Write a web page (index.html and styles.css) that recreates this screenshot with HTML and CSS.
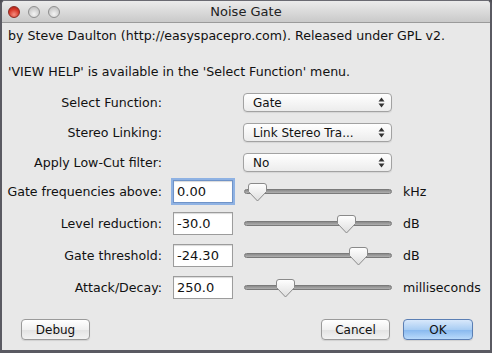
FILE: index.html
```html
<!DOCTYPE html>
<html>
<head>
<meta charset="utf-8">
<link rel="stylesheet" href="styles.css">
</head>
<body>
<div class="window">
  <div class="titlebar">
    <div class="lights">
      <span class="light red"></span>
      <span class="light"></span>
      <span class="light"></span>
    </div>
    <div class="title">Noise Gate</div>
  </div>
  <div class="content">
    <p class="info first">by Steve Daulton (http://easyspacepro.com). Released under GPL v2.</p>
    <p class="info second">'VIEW HELP' is available in the 'Select Function' menu.</p>

    <div class="selects">
      <div class="row sel">
        <label class="lbl">Select Function:</label>
        <div class="select"><span>Gate</span><svg class="arr" width="7" height="11" viewBox="0 0 7 11"><path d="M0.5 4.5 L3.5 0.5 L6.5 4.5Z M0.5 6.5 L3.5 10.5 L6.5 6.5Z" fill="#333"/></svg></div>
      </div>
      <div class="row sel">
        <label class="lbl">Stereo Linking:</label>
        <div class="select"><span>Link Stereo Tra...</span><svg class="arr" width="7" height="11" viewBox="0 0 7 11"><path d="M0.5 4.5 L3.5 0.5 L6.5 4.5Z M0.5 6.5 L3.5 10.5 L6.5 6.5Z" fill="#333"/></svg></div>
      </div>
      <div class="row sel">
        <label class="lbl">Apply Low-Cut filter:</label>
        <div class="select"><span>No</span><svg class="arr" width="7" height="11" viewBox="0 0 7 11"><path d="M0.5 4.5 L3.5 0.5 L6.5 4.5Z M0.5 6.5 L3.5 10.5 L6.5 6.5Z" fill="#333"/></svg></div>
      </div>
    </div>

    <div class="sliders">
      <div class="row sl">
        <label class="lbl">Gate frequencies above:</label>
        <div class="input focus">0.00</div>
        <div class="slider"><div class="track"></div><svg class="thumb" style="left:3px" width="21" height="21" viewBox="0 0 21 21"><path d="M4 1.5 H17 Q19.5 1.5 19.5 4 V9.5 L10.5 19 L1.5 9.5 V4 Q1.5 1.5 4 1.5Z" fill="url(#g)" stroke="#8a8a8a"/><defs><linearGradient id="g" x1="0" y1="0" x2="0" y2="1"><stop offset="0" stop-color="#ffffff"/><stop offset="1" stop-color="#dedede"/></linearGradient></defs></svg></div>
        <span class="unit">kHz</span>
      </div>
      <div class="row sl">
        <label class="lbl">Level reduction:</label>
        <div class="input">-30.0</div>
        <div class="slider"><div class="track"></div><svg class="thumb" style="left:92px" width="21" height="21" viewBox="0 0 21 21"><path d="M4 1.5 H17 Q19.5 1.5 19.5 4 V9.5 L10.5 19 L1.5 9.5 V4 Q1.5 1.5 4 1.5Z" fill="url(#g)" stroke="#8a8a8a"/></svg></div>
        <span class="unit">dB</span>
      </div>
      <div class="row sl">
        <label class="lbl">Gate threshold:</label>
        <div class="input">-24.30</div>
        <div class="slider"><div class="track"></div><svg class="thumb" style="left:104px" width="21" height="21" viewBox="0 0 21 21"><path d="M4 1.5 H17 Q19.5 1.5 19.5 4 V9.5 L10.5 19 L1.5 9.5 V4 Q1.5 1.5 4 1.5Z" fill="url(#g)" stroke="#8a8a8a"/></svg></div>
        <span class="unit">dB</span>
      </div>
      <div class="row sl">
        <label class="lbl">Attack/Decay:</label>
        <div class="input">250.0</div>
        <div class="slider"><div class="track"></div><svg class="thumb" style="left:31px" width="21" height="21" viewBox="0 0 21 21"><path d="M4 1.5 H17 Q19.5 1.5 19.5 4 V9.5 L10.5 19 L1.5 9.5 V4 Q1.5 1.5 4 1.5Z" fill="url(#g)" stroke="#8a8a8a"/></svg></div>
        <span class="unit">milliseconds</span>
      </div>
    </div>

    <div class="buttons">
      <button class="btn">Debug</button>
      <div class="spacer"></div>
      <button class="btn">Cancel</button>
      <button class="btn ok">OK</button>
    </div>
  </div>
</div>
</body>
</html>
```

FILE: styles.css
```css
* { box-sizing: border-box; }
html, body { margin: 0; padding: 0; }
body {
  width: 492px;
  height: 353px;
  background: #4e4e56;
  font-family: "DejaVu Sans", sans-serif;
  font-size: 12.6px;
  color: #111;
}
.window {
  width: 492px;
  height: 353px;
  border: 2px solid #5a5a62;
  border-top: 1px solid #6a6a72;
  border-bottom-width: 3px;
  border-radius: 5px 5px 0 0;
  background: #e8e8e8;
  display: flex;
  flex-direction: column;
  overflow: hidden;
}
.titlebar {
  height: 22px;
  flex: none;
  background: linear-gradient(#ebebeb, #c9c9c9);
  border-bottom: 1px solid #9a9a9a;
  display: flex;
  align-items: center;
  position: relative;
}
.lights {
  display: flex;
  gap: 8px;
  padding-left: 6px;
}
.light {
  width: 12px;
  height: 12px;
  border-radius: 50%;
  background: radial-gradient(circle at 50% 70%, #f4f4f4, #c8c8c8 70%);
  border: 1px solid #8e8e8e;
}
.light.red {
  background: radial-gradient(circle at 50% 75%, #f58e80, #d8392a 55%, #a11a10);
  border-color: #8a2a22;
}
.title {
  position: absolute;
  left: 0;
  right: 0;
  top: 0;
  bottom: 0;
  display: flex;
  align-items: center;
  justify-content: center;
  font-size: 13px;
  color: #222;
}
.content {
  flex: 1;
  display: flex;
  flex-direction: column;
}
.info {
  margin: 0;
  padding-left: 6px;
  line-height: 16px;
}
.info.first { margin-top: 5px; }
.info.second { margin-top: 20px; }

.selects {
  margin-top: 13px;
  display: flex;
  flex-direction: column;
  gap: 11px;
}
.row {
  display: flex;
  align-items: center;
}
.lbl {
  width: 160px;
  text-align: right;
  flex: none;
  white-space: nowrap;
}
.sel .select {
  margin-left: 81px;
  width: 149px;
  height: 19px;
  border: 1px solid #a2a2a2;
  border-radius: 4px;
  background: linear-gradient(#ffffff, #ececec);
  box-shadow: 0 1px 1px rgba(0,0,0,0.08);
  display: flex;
  align-items: center;
  padding-left: 9px;
  padding-right: 6px;
  font-size: 12px;
}
.select span { flex: 1; }
.sliders {
  margin-top: 8px;
  display: flex;
  flex-direction: column;
  gap: 9px;
}
.input {
  margin-left: 11px;
  width: 60px;
  height: 23px;
  background: #fff;
  border: 1px solid #9c9c9c;
  box-shadow: inset 0 1px 1px rgba(0,0,0,0.15);
  padding-left: 3px;
  display: flex;
  align-items: center;
  font-size: 13px;
}
.input.focus {
  border-color: #6f93c8;
  box-shadow: 0 0 0 2px #8fb2e3, inset 0 1px 1px rgba(0,0,0,0.15);
}
.slider {
  margin-left: 11px;
  width: 148px;
  height: 23px;
  position: relative;
  display: flex;
  align-items: center;
}
.track {
  width: 100%;
  height: 5px;
  border-radius: 3px;
  background: linear-gradient(#8a8a8a, #b0b0b0);
  border: 1px solid #7a7a7a;
}
.thumb {
  position: absolute;
  top: 2px;
}
.unit {
  margin-left: 11px;
}
.buttons {
  margin-top: auto;
  margin-bottom: 10px;
  display: flex;
  padding: 0 17px 0 19px;
  gap: 13px;
}
.spacer { flex: 1; }
.btn {
  font-family: "DejaVu Sans", sans-serif;
  font-size: 12px;
  color: #111;
  width: 69px;
  height: 21px;
  border: 1px solid #9a9a9a;
  border-radius: 4px;
  background: linear-gradient(#ffffff, #f0f0f0 50%, #e2e2e2 51%, #f2f2f2);
  box-shadow: 0 1px 1px rgba(0,0,0,0.1);
  padding: 0;
}
.btn.ok {
  width: 70px;
  border-color: #5b7fb4;
  background: linear-gradient(#d8e8fb, #a9cdf3 50%, #86b7ee 51%, #b9dafb);
}
```
